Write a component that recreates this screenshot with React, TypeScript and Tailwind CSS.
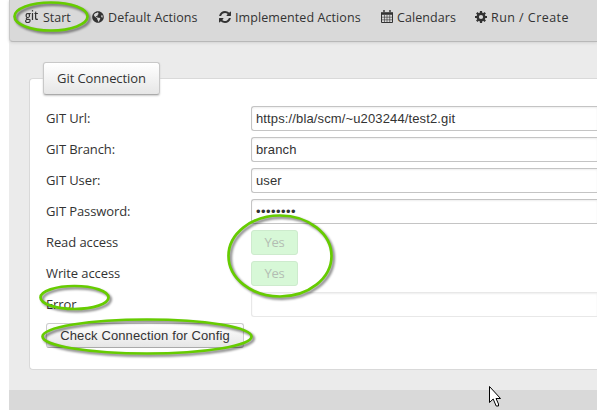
import type { ReactNode } from "react";
import { FaGlobeAmericas } from "react-icons/fa";

function RefreshIcon() {
  return (
    <svg width="12" height="12" viewBox="0 0 1536 1536" fill="#333">
      <path d="M1511 928q0 5-1 7-64 268-268 434.500T764 1536q-146 0-282.500-55T238 1324l-129 129q-19 19-45 19t-45-19-19-45V960q0-26 19-45t45-19h448q26 0 45 19t19 45-19 45l-137 137q71 66 161 102t187 36q134 0 250-65t186-179q11-17 53-117 8-23 30-23h192q13 0 22.500 9.500T1511 928zM1536 128v448q0 26-19 45t-45 19h-448q-26 0-45-19t-19-45 19-45l138-138Q969 256 768 256q-134 0-250 65T332 500q-11 17-53 117-8 23-30 23H50q-13 0-22.500-9.500T18 608v-7q65-268 270-434.500T768 0q146 0 284 55.500T1297 212l130-129q19-19 45-19t45 19 19 45z" />
    </svg>
  );
}

function CalendarIcon() {
  return (
    <svg width="12" height="13" viewBox="0 0 12 13" fill="none" stroke="#333">
      <path d="M.5 3v9.500h11V3" />
      <path d="M0 3.500h12" strokeWidth="2.600" />
      <path d="M3 .2v3M9 .2v3" strokeWidth="2" />
      <path d="M3 .9v1.700M9 .9v1.700" stroke="#d9d9d9" strokeWidth=".6" />
      <path d="M3.500 5v7M6 5v7M8.700 5v7M1 7.200h10M1 9.800h10" strokeWidth=".6" />
    </svg>
  );
}

function CogIcon() {
  return (
    <svg width="12" height="12" viewBox="0 0 12 12" fill="none" stroke="#333">
      <circle cx="6" cy="6" r="3.300" strokeWidth="2.400" />
      <path d="M6 0v2.500M6 9.500V12M0 6h2.500M9.500 6H12M1.800 1.800l1.700 1.700M8.500 8.500l1.700 1.700M1.800 10.200l1.700-1.700M8.500 3.500l1.700-1.700" strokeWidth="2.200" />
    </svg>
  );
}

function NavItem({ icon, label, className }: { icon: ReactNode; label: string; className: string }) {
  return (
    <div className={`flex shrink-0 items-center ${className}`}>
      <span className="flex w-[12px] shrink-0 justify-center -translate-y-px">{icon}</span>
      <span className="ml-[4px] translate-y-px whitespace-nowrap">{label}</span>
    </div>
  );
}

function Row({ label, children }: { label: string; children: ReactNode }) {
  return (
    <div className="flex h-[31px] items-start">
      <div className="w-[205px] shrink-0 text-[13px] leading-[25px] tracking-[-0.100px]">{label}</div>
      {children}
    </div>
  );
}

function Field({ value, faded = false, secret = false }: { value: string; faded?: boolean; secret?: boolean }) {
  return (
    <div
      className={`h-[25px] flex-1 whitespace-nowrap rounded-l-[3px] border border-r-0 bg-white pl-[4px] font-['Liberation_Sans',Arial,sans-serif] text-[13px] leading-[24px] shadow-[inset_0_1px_2px_#eee] ${secret ? "tracking-[0.450px]" : "tracking-[0.130px]"} ${faded ? "border-[#e8e8e8]" : "border-[#c4c4c4]"}`}
    >
      {value}
    </div>
  );
}

function Yes() {
  return (
    <div className="h-[25px] w-[47px] rounded-[3px] border border-[#cdebcd] bg-[#d7f8d7] text-center text-[13px] leading-[23px] tracking-[-0.300px] text-[#b3bdb3]">
      Yes
    </div>
  );
}

function Ring({ cx, cy, rx, ry }: { cx: number; cy: number; rx: number; ry: number }) {
  return (
    <g fill="none">
      <ellipse cx={cx + 2} cy={cy + 2} rx={rx} ry={ry} stroke="#000" strokeOpacity=".45" strokeWidth="3" filter="url(#soft)" />
      <ellipse cx={cx} cy={cy} rx={rx} ry={ry} stroke="#66cc00" strokeWidth="2.700" />
    </g>
  );
}

export default function App() {
  return (
    <div className="relative h-[416px] w-[597px] overflow-hidden bg-white pl-[9px] font-['Open_Sans','Noto_Sans',sans-serif] text-[13px] text-[#333]">
      <div className="h-[410px] bg-[#ebebeb]">
        <header className="flex h-[42px] rounded-bl-[4px] border-b border-l border-b-[#b8b8b8] border-l-[#c8c8c8] bg-[#d9d9d9] pl-[15px] shadow-[0_1px_3px_#d2d2d2]">
          <div className="flex h-[35px] w-[67px] shrink-0 items-center">
            <span className="w-[18px] -translate-y-[2px] text-[13px] font-semibold"><span className="inline-block origin-left scale-x-[0.820]">git</span></span>
            <span className="translate-y-px text-[12.500px]">Start</span>
          </div>
          <nav className="flex h-[35px] text-[12.500px] tracking-[0.080px]">
            <NavItem className="w-[127px]" icon={<FaGlobeAmericas size={12} />} label="Default Actions" />
            <NavItem className="w-[162px]" icon={<RefreshIcon />} label="Implemented Actions" />
            <NavItem className="w-[94px]" icon={<CalendarIcon />} label="Calendars" />
            <NavItem className="tracking-[0.450px]" icon={<CogIcon />} label="Run / Create" />
          </nav>
        </header>
        <main className="flex h-[348px] flex-col pl-[20px] pt-[36px]">
          <section className="h-[292px] rounded-l-[4px] border border-r-0 border-[#d9d9d9] bg-white">
            <div className="-mt-[17px] ml-[13px] h-[33px] w-[117px] rounded-[3px] border border-[#c8c8c8] border-b-[#aaa] bg-linear-to-b from-white to-[#e6e6e6] text-center leading-[31px] tracking-[-0.080px] shadow-[0_1px_2px_#ccc]">
              Git Connection
            </div>
            <div className="pl-[16px] pt-[11px]">
              <Row label="GIT Url:"><Field value="https://bla/scm/~u203244/test2.git" /></Row>
              <Row label="GIT Branch:"><Field value="branch" /></Row>
              <Row label="GIT User:"><Field value="user" /></Row>
              <Row label="GIT Password:"><Field value="••••••••" secret /></Row>
              <Row label="Read access"><Yes /></Row>
              <Row label="Write access"><Yes /></Row>
              <Row label="Error"><Field value="" faded /></Row>
              <div className="h-[25px] w-[198px] whitespace-nowrap rounded-[3px] border border-[#ccc] border-b-[#aaa] bg-linear-to-b from-white to-[#e6e6e6] text-center font-['Liberation_Sans',Arial,sans-serif] text-[13px] leading-[23px] tracking-[0.130px]">
                Check Connection for Config
              </div>
            </div>
          </section>
        </main>
        <footer className="h-[20px] bg-[#d9d9d9]" />
      </div>
      <svg className="absolute left-0 top-0" width="597" height="416" viewBox="0 0 597 416">
        <defs>
          <filter id="soft" x="-20%" y="-20%" width="140%" height="150%">
            <feGaussianBlur stdDeviation="1.300" />
          </filter>
        </defs>
        <Ring cx={51} cy={16.5} rx={36.5} ry={14} />
        <Ring cx={280} cy={256} rx={51.5} ry={40.5} />
        <Ring cx={74.500} cy={297.5} rx={34} ry={11.5} />
        <Ring cx={147} cy={336.5} rx={104.5} ry={17} />
        <path d="M489.500 386.500v16l3.700-3.500 3 7h2.300v-2l-2.500-5.500h4.500z" fill="#fff" stroke="#000" />
      </svg>
    </div>
  );
}
